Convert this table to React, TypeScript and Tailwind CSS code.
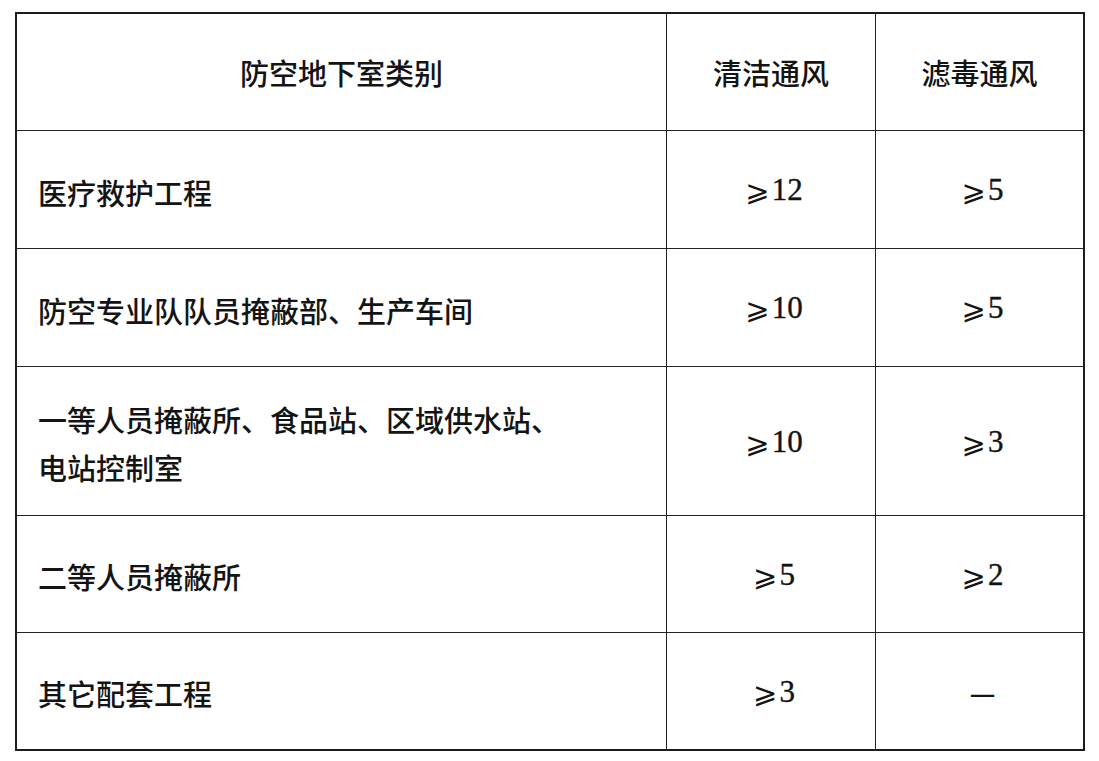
import React from "react";

const cjk = { fontFamily: '"Noto Sans CJK SC", "Noto Sans", sans-serif' };

function Num({ v }: { v: string }) {
  return (
    <span className="inline-flex items-baseline text-[#141414]">
      <span
        className="text-[29px] mr-[2px] relative top-[1px] font-medium"
        style={{ fontFamily: '"DejaVu Sans", "Noto Sans", sans-serif' }}
      >
        ⩾
      </span>
      <span className="text-[31px]" style={{ fontFamily: '"Liberation Serif", serif', WebkitTextStroke: "0.4px #141414" }}>
        {v}
      </span>
    </span>
  );
}

type Row = { name: React.ReactNode; a: React.ReactNode; b: React.ReactNode; h: string; last?: boolean };

export default function App() {
  const rows: Row[] = [
    { name: "医疗救护工程", a: <Num v="12" />, b: <Num v="5" />, h: "h-[118px]" },
    { name: "防空专业队队员掩蔽部、生产车间", a: <Num v="10" />, b: <Num v="5" />, h: "h-[118px]" },
    {
      name: (
        <>
          一等人员掩蔽所、食品站、区域供水站、
          <br />
          电站控制室
        </>
      ),
      a: <Num v="10" />,
      b: <Num v="3" />,
      h: "h-[149px]",
    },
    { name: "二等人员掩蔽所", a: <Num v="5" />, b: <Num v="2" />, h: "h-[117px]" },
    {
      name: "其它配套工程",
      a: <Num v="3" />,
      b: <span className="text-[29px]" style={cjk}>—</span>,
      h: "h-[116px]",
      last: true,
    },
  ];

  return (
    <div className="w-[1099px] h-[761px] bg-white pt-[12px] pl-[15px]">
      <div className="w-[1070px] border-2 border-[#1c1c1c] text-[#141414] font-medium" style={cjk}>
        <div className="flex h-[117px] border-b border-[#222]">
          <div className="w-[650px] border-r border-[#222] flex items-center justify-center text-[29px] pt-[2px]">
            防空地下室类别
          </div>
          <div className="w-[209px] border-r border-[#222] flex items-center justify-center text-[29px] pt-[2px]">
            清洁通风
          </div>
          <div className="w-[207px] flex items-center justify-center text-[29px] pt-[2px]">
            滤毒通风
          </div>
        </div>
        {rows.map((r, i) => (
          <div key={i} className={`flex ${r.h} ${r.last ? "" : "border-b border-[#222]"}`}>
            <div className="w-[650px] border-r border-[#222] flex items-center pl-[21px] text-[29px] leading-[48px] pt-[4px]">
              <div>{r.name}</div>
            </div>
            <div className="w-[209px] border-r border-[#222] flex items-center justify-center pl-[6px] pt-[2px]">
              {r.a}
            </div>
            <div className="w-[207px] flex items-center justify-center pl-[6px] pt-[2px]">{r.b}</div>
          </div>
        ))}
      </div>
    </div>
  );
}
